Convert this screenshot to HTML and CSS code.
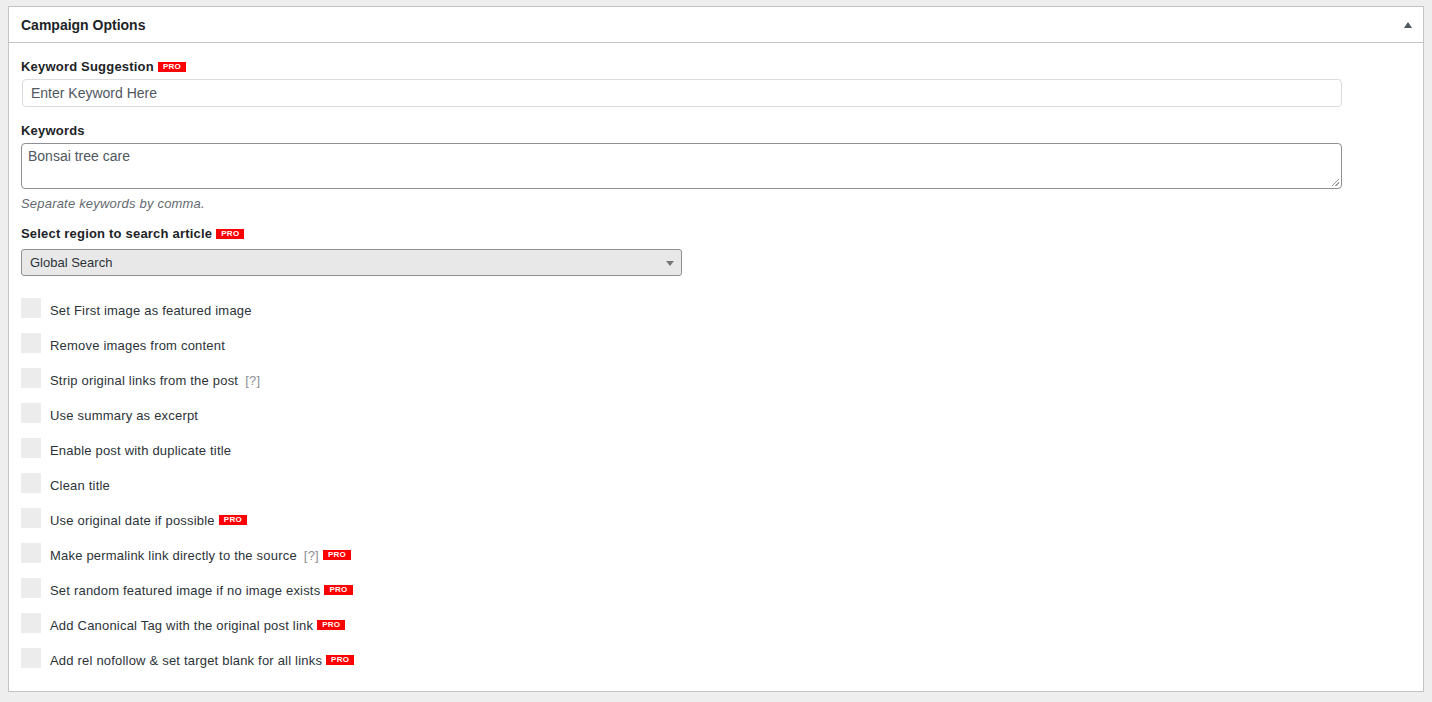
FILE: index.html
```html
<!DOCTYPE html>
<html>
<head>
<meta charset="utf-8">
<link rel="stylesheet" href="styles.css">
</head>
<body>
<div class="postbox">
  <div class="postbox-header">
    <h2 class="hndle">Campaign Options</h2>
    <span class="toggle-arrow"></span>
  </div>
  <div class="inside">
    <div class="field field-suggest">
      <label class="field-label">Keyword Suggestion <span class="pro">PRO</span></label>
      <div class="text-input placeholder">Enter Keyword Here</div>
    </div>
    <div class="field">
      <label class="field-label">Keywords</label>
      <div class="textarea">Bonsai tree care<span class="grip"></span></div>
      <p class="description">Separate keywords by comma.</p>
    </div>
    <div class="field field-select">
      <label class="field-label">Select region to search article <span class="pro">PRO</span></label>
      <div class="select">Global Search<span class="caret"></span></div>
    </div>
    <ul class="checks">
      <li><span class="cb"></span><span class="lbl">Set First image as featured image</span></li>
      <li><span class="cb"></span><span class="lbl">Remove images from content</span></li>
      <li><span class="cb"></span><span class="lbl">Strip original links from the post</span><span class="help">[?]</span></li>
      <li><span class="cb"></span><span class="lbl">Use summary as excerpt</span></li>
      <li><span class="cb"></span><span class="lbl">Enable post with duplicate title</span></li>
      <li><span class="cb"></span><span class="lbl">Clean title</span></li>
      <li><span class="cb"></span><span class="lbl">Use original date if possible</span><span class="pro">PRO</span></li>
      <li><span class="cb"></span><span class="lbl">Make permalink link directly to the source</span><span class="help">[?]</span><span class="pro">PRO</span></li>
      <li><span class="cb"></span><span class="lbl">Set random featured image if no image exists</span><span class="pro">PRO</span></li>
      <li><span class="cb"></span><span class="lbl">Add Canonical Tag with the original post link</span><span class="pro">PRO</span></li>
      <li><span class="cb"></span><span class="lbl">Add rel nofollow &amp; set target blank for all links</span><span class="pro">PRO</span></li>
    </ul>
  </div>
</div>
</body>
</html>
```

FILE: styles.css
```css
html, body {
  margin: 0;
  padding: 0;
}
body {
  background: #eeeeee;
  padding: 6px 8px 0 8px;
  font-family: "Liberation Sans", Arial, sans-serif;
  font-size: 13px;
  color: #3c434a;
}
.postbox {
  background: #fff;
  border: 1px solid #c3c4c7;
  height: 686px;
  box-sizing: border-box;
}
.postbox-header {
  display: flex;
  align-items: center;
  justify-content: space-between;
  height: 35px;
  border-bottom: 1px solid #c3c4c7;
  padding: 0 12px;
}
.hndle {
  margin: 0;
  font-size: 14px;
  font-weight: 600;
  color: #1d2327;
}
.toggle-arrow {
  width: 0;
  height: 0;
  border-left: 4px solid transparent;
  border-right: 4px solid transparent;
  border-bottom: 6px solid #50575e;
  margin-right: -1px;
}
.inside {
  padding: 16px 12px 0 12px;
}
.field {
  margin-bottom: 14px;
}
.field-suggest {
  margin-bottom: 16px;
}
.field-label {
  display: flex;
  align-items: center;
  gap: 4px;
  font-weight: bold;
  color: #1d2327;
  font-size: 13px;
  line-height: 16px;
  letter-spacing: 0.2px;
  margin-bottom: 4px;
}
.pro {
  display: inline-block;
  background: #ff0000;
  color: #fff;
  font-size: 8px;
  font-weight: bold;
  line-height: 10px;
  height: 10px;
  padding: 0 5px;
  letter-spacing: 0.3px;
}
.text-input {
  width: 1320px;
  margin-left: 1px;
  height: 28px;
  box-sizing: border-box;
  border: 1px solid #dcdcde;
  border-radius: 4px;
  padding: 0 8px;
  line-height: 26px;
  font-size: 14px;
  color: #50575e;
}
.textarea {
  position: relative;
  width: 1321px;
  height: 46px;
  box-sizing: border-box;
  border: 1px solid #8c8f94;
  border-radius: 4px;
  padding: 4px 6px;
  font-size: 14px;
  line-height: 17px;
  color: #50575e;
}
.grip {
  position: absolute;
  right: 2px;
  bottom: 2px;
  width: 7px;
  height: 7px;
  background: linear-gradient(135deg, transparent 45%, #999 45%, #999 55%, transparent 55%, transparent 70%, #999 70%, #999 80%, transparent 80%);
}
.description {
  margin: 7px 0 0 0;
  font-style: italic;
  color: #646970;
  font-size: 13px;
  line-height: 16px;
  letter-spacing: 0.2px;
}
.field-select .field-label {
  margin-bottom: 7px;
}
.select {
  position: relative;
  width: 661px;
  height: 27px;
  box-sizing: border-box;
  border: 1px solid #8c8f94;
  border-radius: 3px;
  background: #e8e8e8;
  padding: 0 8px;
  line-height: 26px;
  font-size: 13px;
  color: #2c3338;
}
.caret {
  position: absolute;
  right: 7px;
  top: 11px;
  width: 0;
  height: 0;
  border-left: 4px solid transparent;
  border-right: 4px solid transparent;
  border-top: 5px solid #777;
}
.checks {
  list-style: none;
  margin: 0;
  padding: 0;
  margin-top: 22px;
}
.checks li {
  display: flex;
  align-items: flex-start;
  height: 20px;
  margin-bottom: 15px;
  color: #2c3338;
  letter-spacing: 0.2px;
}
.cb {
  width: 20px;
  height: 20px;
  background: #ececec;
  margin-right: 9px;
  flex: none;
}
.lbl {
  line-height: 16px;
  margin-top: 5px;
}
.help {
  color: #8c8f94;
  margin-left: 7px;
  line-height: 16px;
  margin-top: 5px;
}
.checks li .pro {
  margin-left: 4px;
  margin-top: 7px;
}
```
